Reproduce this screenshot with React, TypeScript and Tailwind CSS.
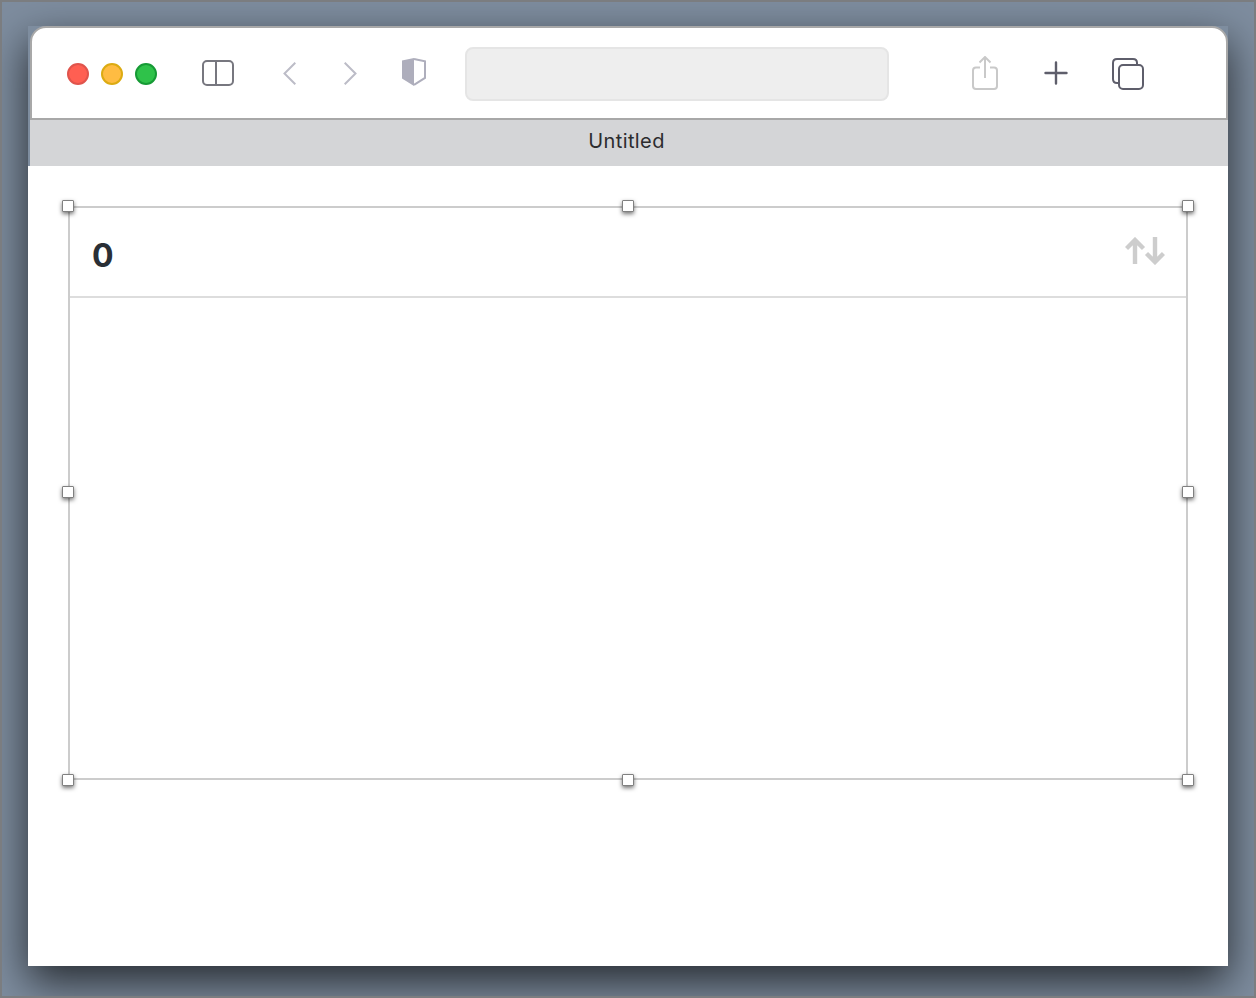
const Handle = ({ cls }: { cls: string }) => (
  <div className={`absolute w-[12px] h-[12px] bg-white border border-[#808080] rounded-[1px] shadow-[0_2px_4px_rgba(0,0,0,0.55)] ${cls}`} />
);

export default function App() {
  return (
    <div className="w-[1256px] h-[998px] overflow-hidden bg-[#7e8d9f] border-2 border-[#7b7d80] pt-[24px] pl-[26px] font-['Inter','Liberation_Sans',sans-serif]">
      <div className="w-[1200px] h-[940px] flex flex-col shadow-[0_16px_40px_rgba(0,0,0,0.7)]">
        <div className="ml-[2px] h-[94px] rounded-t-[16px] bg-white border-2 border-[#a8a8a8] pl-[35px] pt-[2px] flex items-center">
          <div className="w-[22px] h-[22px] rounded-full bg-[#ff5f52] border-2 border-[#e0544c]" />
          <div className="ml-[12px] w-[22px] h-[22px] rounded-full bg-[#ffbc42] border-2 border-[#dcab12]" />
          <div className="ml-[12px] w-[22px] h-[22px] rounded-full bg-[#2fc24a] border-2 border-[#169a35]" />
          <svg className="ml-[45px] mt-[-2px]" width="32" height="26" viewBox="0 0 32 26" fill="none" stroke="#77777f" strokeWidth="2">
            <rect x="1" y="1" width="30" height="24" rx="4" />
            <path d="M14 1V25" />
          </svg>
          <svg className="ml-[49px] mt-[-2px]" width="13" height="23" viewBox="0 0 13 23" fill="none" stroke="#bcbcc7" strokeWidth="2">
            <path d="M12.3 0.7L1.5 11.5L12.3 22.3" />
          </svg>
          <svg className="ml-[48px] mt-[-2px]" width="13" height="23" viewBox="0 0 13 23" fill="none" stroke="#bcbcc7" strokeWidth="2">
            <path d="M0.7 0.7L11.5 11.5L0.7 22.3" />
          </svg>
          <svg className="ml-[45px] mt-[-4px]" width="24" height="28" viewBox="0 0 24 28">
            <path d="M12 0L0 2.5V20.5L12 28V0Z" fill="#aeaebc" />
            <path d="M12 1L23 3.3V19.9L12 26.8" fill="none" stroke="#aeaebc" strokeWidth="2" />
          </svg>
          <div className="ml-[39px] w-[424px] h-[54px] rounded-[8px] bg-[#eeeeee] border-2 border-[#e5e5e5]" />
          <svg className="ml-[83px] mt-[-2px]" width="26" height="34" viewBox="0 0 26 34" fill="none" stroke="#c9c9c9" strokeWidth="2">
            <path d="M8 11.5H4C2 11.5 1 12.5 1 14.5V30C1 32 2 33 4 33H22C24 33 25 32 25 30V14.5C25 12.5 24 11.5 22 11.5H18" />
            <path d="M13 22V1.5M7.5 6.5L13 1L18.5 6.5" />
          </svg>
          <svg className="ml-[46px] mt-[-2px]" width="24" height="24" viewBox="0 0 24 24" fill="none" stroke="#5e5e6b" strokeWidth="2.4" strokeLinecap="round">
            <path d="M12 1.5V22.5M1.5 12H22.5" />
          </svg>
          <svg className="ml-[44px]" width="32" height="32" viewBox="0 0 32 32" fill="none" stroke="#5e5e6b" strokeWidth="2">
            <path d="M6 25H5C2.5 25 1 23.5 1 21V5C1 2.5 2.5 1 5 1H21C23.5 1 25 2.5 25 5V6" />
            <rect x="7" y="7" width="24" height="24" rx="4" />
          </svg>
        </div>
        <div className="ml-[2px] h-[46px] bg-[#d4d5d7] flex items-center justify-center text-[20px] leading-none tracking-[0.4px] text-[#2c2c2e] pr-[5px] pb-[5px]">
          Untitled
        </div>
        <div className="h-[800px] bg-white pt-[40px] pl-[40px]">
          <div className="relative w-[1120px] h-[574px] border-2 border-[#cccccc]">
            <div className="h-[90px] border-b-2 border-[#dddddd] flex justify-between pl-[22px] pr-[21px]">
              <span className="mt-[28px] text-[32px] leading-[40px] font-bold text-[#2a2f36]">0</span>
              <svg className="mt-[29px]" width="40" height="28" viewBox="0 0 40 28" fill="none" stroke="#cdcdcd" strokeWidth="4.4">
                <path d="M10 27V3M1.5 11.5L10 3L18.5 11.5" />
                <path d="M30 0V25M21.5 16.5L30 25L38.5 16.5" />
              </svg>
            </div>
            <Handle cls="left-[-8px] top-[-8px]" />
            <Handle cls="left-[552px] top-[-8px]" />
            <Handle cls="right-[-8px] top-[-8px]" />
            <Handle cls="left-[-8px] top-[278px]" />
            <Handle cls="right-[-8px] top-[278px]" />
            <Handle cls="left-[-8px] bottom-[-8px]" />
            <Handle cls="left-[552px] bottom-[-8px]" />
            <Handle cls="right-[-8px] bottom-[-8px]" />
          </div>
        </div>
      </div>
    </div>
  );
}
